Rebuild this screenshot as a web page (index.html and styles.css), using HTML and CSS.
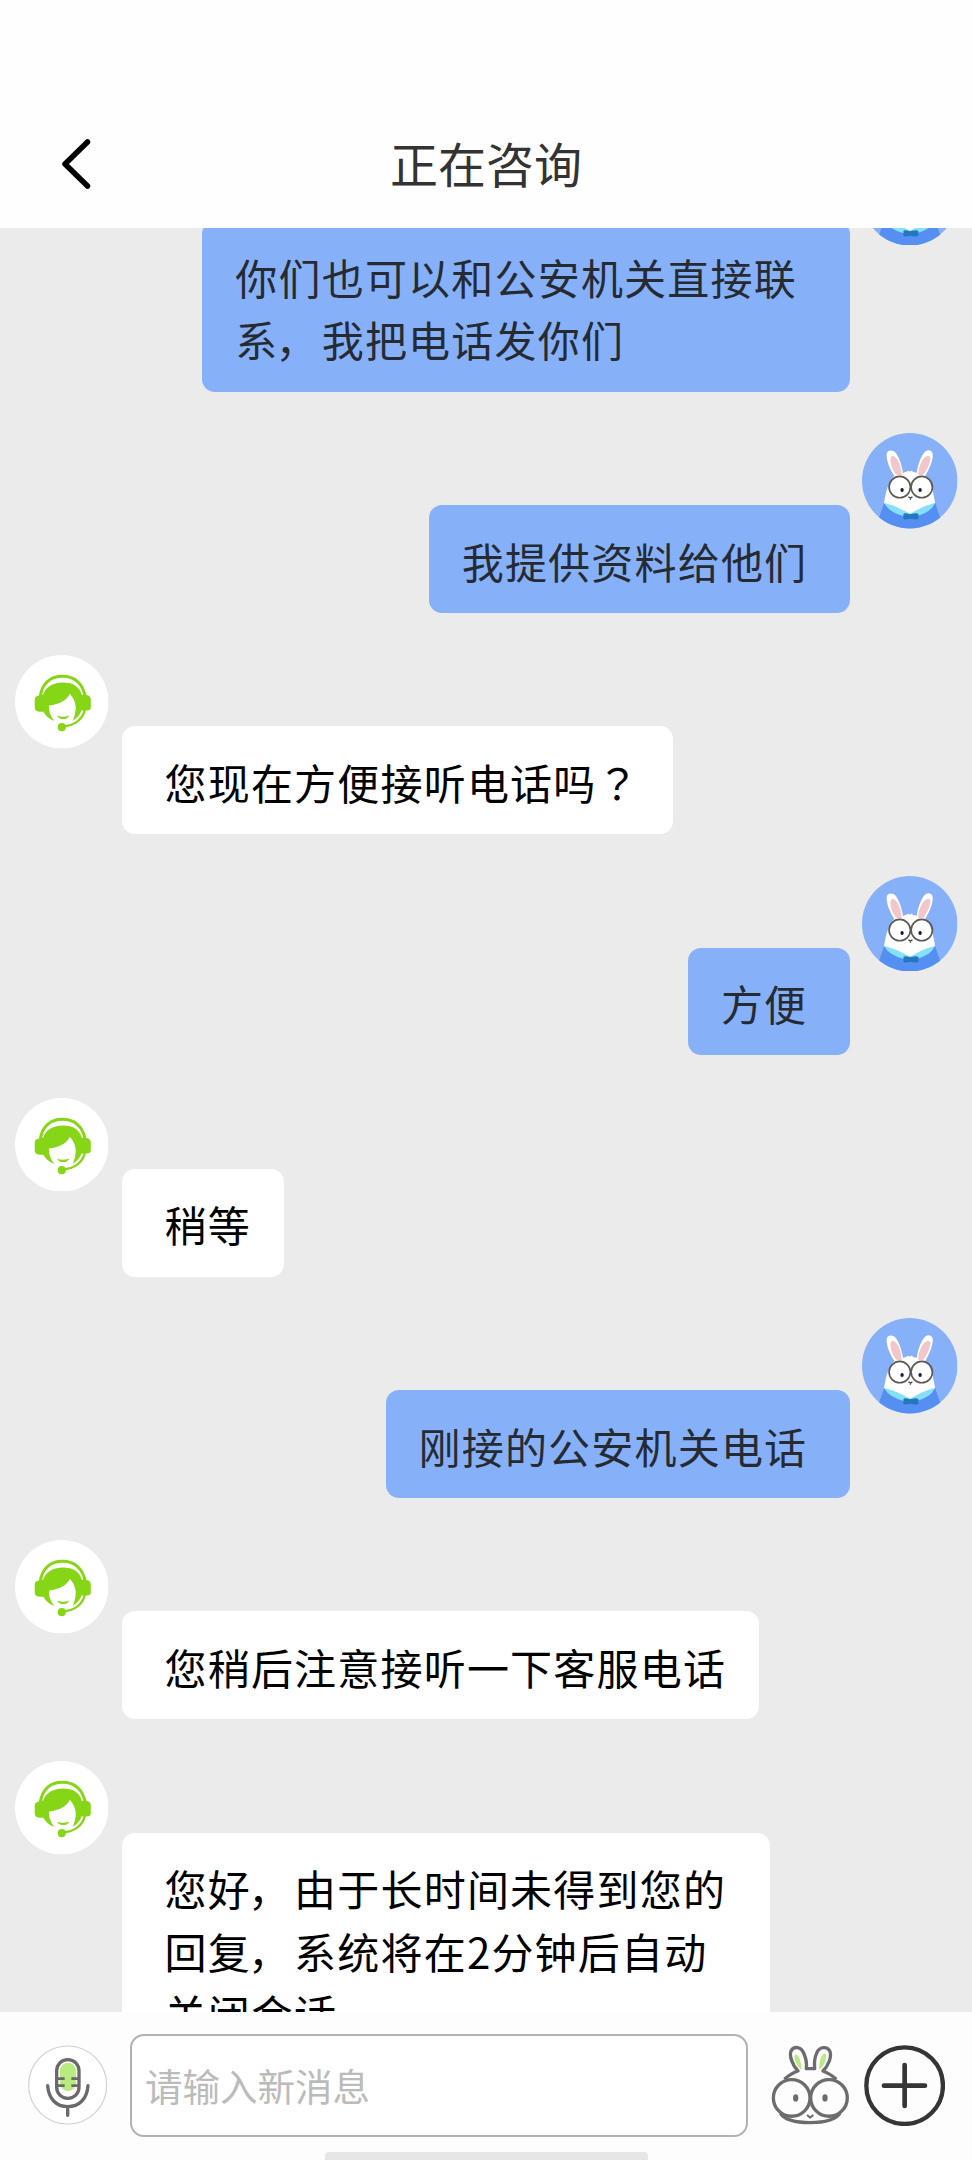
FILE: index.html
```html
<!DOCTYPE html>
<html lang="zh-CN">
<head>
<meta charset="utf-8">
<title>正在咨询</title>
<link rel="stylesheet" href="styles.css">
</head>
<body>
<svg class="defs" width="0" height="0" aria-hidden="true">
  <symbol id="rabbit" viewBox="67 38 286 286">
    <clipPath id="disc"><circle cx="210" cy="181" r="143"/></clipPath>
    <g clip-path="url(#disc)">
      <rect x="67" y="38" width="286" height="286" fill="#86b1f9"/>
      <path d="M133 248Q210 268 286 248L301 292V330H118V292Z" fill="#558ff2"/>
      <path d="M164 166C151 148 139 119 141 100C144 86 162 88 170 100C182 118 187 140 190 158L206 151L210 154L216 150L220 155L231 157C234 136 242 111 254 96C262 86 277 88 279 102C280 122 267 148 257 166C273 178 281 218 286 247C265 268 240 273 211 280C181 275 155 267 133 248C138 218 144 186 164 166Z" fill="#fff"/>
      <path d="M167 160C155 143 150 123 153 111C158 102 168 108 174 119C182 134 185 148 186 163Q176 168 167 160Z" fill="#f1c7cb"/>
      <path d="M253 160C264 143 273 124 272 111C266 102 255 108 248 119C239 135 236 148 235 162Q244 168 253 160Z" fill="#f1c7cb"/>
      <path d="M133 248Q161 253 211 280Q257 253 286 248Q272 278 225 288H197Q150 278 133 248Z" fill="#86e0fb"/>
      <path d="M146 251Q178 257 211 279Q246 257 274 251Q244 237 211 240Q178 237 146 251Z" fill="#fff"/>
      <path d="M191 281Q192 276 211 281Q233 275 236 281V295Q233 299 211 295Q193 299 191 295Z" fill="#2277bd"/>
      <g fill="none" stroke="#5e5955" stroke-width="5">
        <circle cx="180" cy="200" r="32"/><circle cx="246" cy="200" r="32"/>
      </g>
      <ellipse cx="187" cy="209" rx="5" ry="6" fill="#17193a"/>
      <ellipse cx="241" cy="209" rx="5" ry="6" fill="#17193a"/>
      <path d="M206 229L212 233L218 229M212 233V238" fill="none" stroke="#444" stroke-width="4"/>
    </g>
  </symbol>
  <symbol id="agent" viewBox="46 45 280 280">
    <circle cx="186" cy="185" r="140" fill="#fff"/>
    <path d="M122 170C126 128 154 109 188 109C224 109 250 130 256 170" fill="none" stroke="#86d516" stroke-width="9"/>
    <path d="M118 166Q105 167 105 179V203Q106 215 122 215H131C137 227 147 236 164 243C151 226 146 208 148 196C179 193 203 180 210 161C220 171 226 184 228 201C228 217 224 231 219 242C235 231 241 222 245 211H261Q273 211 273 202V178Q273 167 260 165L246 164C239 138 219 127 190 127C157 127 137 142 130 164Z" fill="#86d516"/>
    <path d="M172 227Q190 233 209 226Q203 237 191 237Q178 237 172 227Z" fill="#86d516"/>
    <path d="M255 209C249 237 225 257 188 259" fill="none" stroke="#86d516" stroke-width="7"/>
    <circle cx="186" cy="261" r="12" fill="#86d516"/>
  </symbol>
</svg>

<div class="screen">
  <header class="header">
    <svg class="back" viewBox="0 0 30 50"><path d="M26.5 3L4 25L26.5 47" fill="none" stroke="#000" stroke-width="5.5" stroke-linecap="round" stroke-linejoin="round"/></svg>
    <h1 class="title">正在咨询</h1>
  </header>

  <main class="chat">
    <div class="message mine">
      <svg class="avatar"><use href="#rabbit"/></svg>
      <p class="bubble multiline">你们也可以和公安机关直接联<br>系<span class="comma">，</span>我把电话发你们</p>
    </div>
    <div class="message mine">
      <svg class="avatar"><use href="#rabbit"/></svg>
      <p class="bubble">我提供资料给他们</p>
    </div>
    <div class="message">
      <svg class="avatar"><use href="#agent"/></svg>
      <p class="bubble">您现在方便接听电话吗<span class="question" lang="zh-TW">？</span></p>
    </div>
    <div class="message mine">
      <svg class="avatar"><use href="#rabbit"/></svg>
      <p class="bubble">方便</p>
    </div>
    <div class="message">
      <svg class="avatar"><use href="#agent"/></svg>
      <p class="bubble">稍等</p>
    </div>
    <div class="message mine">
      <svg class="avatar"><use href="#rabbit"/></svg>
      <p class="bubble">刚接的公安机关电话</p>
    </div>
    <div class="message">
      <svg class="avatar"><use href="#agent"/></svg>
      <p class="bubble">您稍后注意接听一下客服电话</p>
    </div>
    <div class="message">
      <svg class="avatar"><use href="#agent"/></svg>
      <p class="bubble multiline">您好<span class="comma">，</span>由于长时间未得到您的<br>回复<span class="comma">，</span>系统将在2分钟后自动<br>关闭会话</p>
    </div>
  </main>

  <footer class="footer">
    <div class="composer">
      <svg class="mic" viewBox="83 136 240 240">
        <circle cx="202" cy="256" r="117" fill="#fff" stroke="#d2cfd0" stroke-width="3.5"/>
        <rect x="179" y="189" width="48" height="85" rx="24" fill="#b9eb80"/>
        <g fill="none" stroke="#6a6a6a" stroke-width="10">
          <rect x="169" y="180" width="67" height="116" rx="33"/>
          <path d="M169 237H193M169 258H193M213 237H236M213 258H236" stroke-width="8"/>
          <path d="M142 258C145 299 169 321 202 321C236 321 260 299 263 258M202 321V347" stroke-linecap="round"/>
        </g>
      </svg>
      <div class="field">请输入新消息</div>
      <svg class="emoji" viewBox="152 134 237 242">
        <g fill="none" stroke="#6c6c6c" stroke-width="10" stroke-linejoin="round">
          <path d="M192 237Q213 218 233 212C216 195 205 165 213 150C221 137 242 139 250 158C257 174 260 190 258 205H283C281 188 284 169 290 156C299 138 320 138 328 151C336 168 324 196 308 212Q328 219 348 237"/>
          <circle cx="214" cy="293" r="55"/><circle cx="326" cy="293" r="55"/>
          <path d="M180 339C194 360 223 367 270 367C315 367 344 360 359 339"/>
          <path d="M260 344L269 352L279 344" stroke-width="6"/>
        </g>
        <path d="M222 165C230 155 242 173 244 207C231 202 222 181 222 165ZM317 161C308 153 297 175 296 207C309 202 320 178 317 161Z" fill="#b9e989"/>
        <ellipse cx="226" cy="293" rx="8" ry="11" fill="#6c6c6c"/>
        <ellipse cx="314" cy="293" rx="8" ry="11" fill="#6c6c6c"/>
      </svg>
      <svg class="plus" viewBox="432 134 244 244">
        <g fill="none" stroke="#353535" stroke-width="13" stroke-linecap="round">
          <circle cx="554" cy="256" r="115"/>
          <path d="M492 256H615M554 194V317" stroke-width="14"/>
        </g>
      </svg>
    </div>
    <div class="home-bar"></div>
  </footer>
</div>
</body>
</html>
```
FILE: styles.css
```css
* { box-sizing: border-box; }

body {
  margin: 0;
  font-family: "Noto Sans CJK SC", sans-serif;
  font-weight: 400;
}

.defs { display: block; }

.screen {
  display: flex;
  flex-direction: column;
  width: 972px;
  height: 2160px;
  overflow: hidden;
  background: #ebebeb;
}

.header {
  flex: none;
  display: grid;
  grid-template-columns: 100px 1fr 100px;
  align-items: center;
  height: 228px;
  padding-top: 100px;
  background: #fefefe;
}

.back {
  width: 30px;
  height: 50px;
  margin-left: 61px;
}

.title {
  margin: 0 0 4px;
  font-size: 48px;
  font-weight: 400;
  line-height: 72px;
  text-align: center;
  color: #333;
}

.chat {
  flex: 1;
  min-height: 0;
  overflow: hidden;
  display: flex;
  flex-direction: column;
  gap: 41.7px;
}

.message {
  flex: none;
  display: flex;
  gap: 13px;
  padding-left: 15px;
}

.message:first-child { margin-top: -78.5px; }

.mine {
  flex-direction: row-reverse;
  gap: 11.7px;
  padding: 0 14.5px 0 0;
}

.avatar {
  flex: none;
  width: 93.5px;
  height: 93.5px;
  margin-top: 0.5px;
}

.mine .avatar {
  width: 95.5px;
  height: 95.5px;
  margin-top: 0;
}

.bubble {
  margin: 71.9px 0 0;
  padding: 24.5px 33px 20.7px 43px;
  border-radius: 13px;
  background: #fff;
  color: #000;
  font-size: 42px;
  letter-spacing: 1.2px;
  line-height: 62.5px;
  white-space: nowrap;
}

.mine .bubble {
  padding: 24.5px 43px 20.7px 33px;
  background: #86b1f9;
  color: #262b33;
}

.bubble.multiline { width: 648px; }

.comma { margin: 0 3px 0 -3px; }

.question { font-family: "Noto Sans CJK TC", sans-serif; }

.footer {
  flex: none;
  display: flex;
  flex-direction: column;
  align-items: center;
  justify-content: space-between;
  height: 148.5px;
  padding-top: 22.5px;
  background: #fdfdfd;
}

.composer {
  display: flex;
  align-items: center;
  width: 972px;
  padding-left: 27.5px;
}

.mic {
  width: 80px;
  height: 80px;
}

.field {
  width: 618px;
  height: 102.5px;
  margin: 0 23px 0 22.5px;
  padding: 0 13px;
  border: 2px solid #b2b2b2;
  border-radius: 14px;
  background: #fff;
  color: #bbb;
  font-size: 37.5px;
  line-height: 98px;
}

.emoji {
  width: 79px;
  height: 80.6px;
}

.plus {
  width: 81.3px;
  height: 81.3px;
  margin-left: 14px;
}

.home-bar {
  width: 323px;
  height: 8px;
  border-radius: 4px 4px 0 0;
  background: #e6e6e6;
}
```
